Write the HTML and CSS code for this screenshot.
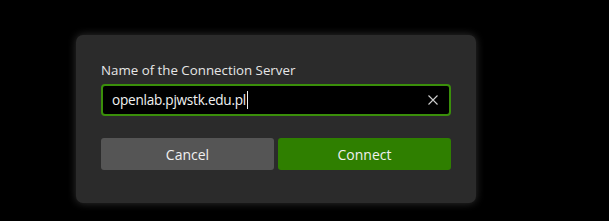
FILE: index.html
```html
<!DOCTYPE html>
<html>
<head>
<meta charset="utf-8">
<link rel="stylesheet" href="styles.css">
</head>
<body>
<div class="dialog">
  <label class="label">Name of the Connection Server</label>
  <div class="input">
    <span class="value">openlab.pjwstk.edu.pl</span><span class="caret"></span>
    <svg class="clear" width="10" height="10" viewBox="0 0 10 10"><path d="M0.5 0.5 L9.5 9.5 M9.5 0.5 L0.5 9.5" stroke="#cfcfcf" stroke-width="1.1" fill="none"/></svg>
  </div>
  <div class="buttons">
    <button class="btn cancel">Cancel</button>
    <button class="btn connect">Connect</button>
  </div>
</div>
</body>
</html>
```
FILE: styles.css
```css
html, body {
  margin: 0;
  padding: 0;
  background: #000;
  height: 100%;
}
body {
  padding: 35px 0 0 76px;
  box-sizing: border-box;
  font-family: "Open Sans", "Noto Sans", sans-serif;
}
.dialog {
  width: 400px;
  height: 168px;
  box-sizing: border-box;
  padding: 25px 25px 0 25px;
  background: #2b2b2b;
  border-radius: 7px;
  box-shadow: 0 0 9px rgba(110, 110, 110, 0.45);
  display: flex;
  flex-direction: column;
}
.label {
  display: block;
  color: #e6e6e6;
  font-size: 13.3px;
  line-height: 20px;
  height: 20px;
  margin-bottom: 4px;
}
.input {
  height: 32px;
  box-sizing: border-box;
  border: 2px solid #3a8f0a;
  border-radius: 4px;
  background: #000;
  display: flex;
  align-items: center;
  padding: 0 11px 0 9px;
}
.value {
  color: #f2f2f2;
  font-size: 13.6px;
  letter-spacing: -0.25px;
  line-height: 20px;
}
.caret {
  width: 1px;
  height: 18px;
  background: #f2f2f2;
  margin-left: 1px;
}
.clear {
  margin-left: auto;
}
.buttons {
  margin-top: 22px;
  display: flex;
  gap: 4px;
}
.btn {
  flex: 1;
  height: 32px;
  border: none;
  border-radius: 3px;
  color: #f0f0f0;
  font-family: "Open Sans", "Noto Sans", sans-serif;
  font-size: 14px;
  padding: 0;
}
.cancel {
  background: #555555;
}
.connect {
  background: #2f7f00;
}
```
